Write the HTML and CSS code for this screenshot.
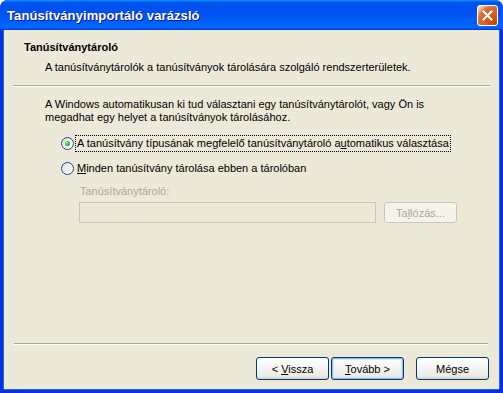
FILE: index.html
```html
<!DOCTYPE html>
<html lang="hu">
<head>
  <meta charset="UTF-8" />
  <title>Tanúsítványimportáló varázsló</title>
  <link rel="stylesheet" href="styles.css">
</head>
<body>
  <div class="window">
    <!-- Címsor -->
    <div class="titlebar">
      <span class="title-text">Tanúsítványimportáló varázsló</span>
      <button class="close-btn" aria-label="Bezárás">
        <svg width="13" height="13" viewBox="0 0 13 13">
          <path d="M2.5 2.5 L10.5 10.5 M10.5 2.5 L2.5 10.5" stroke="#fff" stroke-width="2" stroke-linecap="square" fill="none"/>
        </svg>
      </button>
    </div>
    <div class="client">
      <!-- Fejléc -->
      <div class="header">
        <div class="header-title">Tanúsítványtároló</div>
        <div class="header-sub">A tanúsítványtárolók a tanúsítványok tárolására szolgáló rendszerterületek.</div>
      </div>
      <div class="separator top-sep"></div>
      <!-- Tartalom -->
      <div class="page">
        <p class="intro">A Windows automatikusan ki tud választani egy tanúsítványtárolót, vagy Ön is megadhat egy helyet a tanúsítványok tárolásához.</p>
        <div class="options">
          <label class="option">
            <span class="radio checked"></span>
            <span class="option-text focused">A tanúsítvány típusának megfelelő tanúsítványtároló a<u>u</u>tomatikus választása</span>
          </label>
          <label class="option">
            <span class="radio"></span>
            <span class="option-text"><u>M</u>inden tanúsítvány tárolása ebben a tárolóban</span>
          </label>
        </div>
        <div class="store">
          <div class="store-label">Tanúsítványtároló:</div>
          <div class="store-row">
            <div class="textbox"></div>
            <button class="btn disabled">Ta<u>l</u>lózás...</button>
          </div>
        </div>
      </div>
      <!-- Lábléc -->
      <div class="footer">
        <div class="separator bottom-sep"></div>
        <div class="buttons">
          <button class="btn">&lt; <u>V</u>issza</button>
          <button class="btn default"><u>T</u>ovább &gt;</button>
          <button class="btn cancel">Mégse</button>
        </div>
      </div>
    </div>
  </div>
</body>
</html>
```

FILE: styles.css
```css
body {
  margin: 0;
  background: #fff;
  font-family: 'Liberation Sans', Arial, sans-serif;
  font-size: 11px;
  color: #000;
}
.window {
  width: 503px;
  height: 393px;
  display: flex;
  flex-direction: column;
  border-radius: 8px 8px 0 0;
  overflow: hidden;
  background: #0831d9;
}
.titlebar {
  height: 30px;
  flex: 0 0 30px;
  display: flex;
  align-items: center;
  justify-content: space-between;
  padding: 0 5px 0 7px;
  background: linear-gradient(180deg, #0997ff, #0053ee 8%, #0050ee 40%, #06f 88%, #06f 93%, #005bff 95%, #003dd7 96%, #003dd7);
}
.title-text {
  color: #fff;
  font-weight: bold;
  font-size: 13px;
  letter-spacing: 0.1px;
  text-shadow: 1px 1px #0f1089;
}
.close-btn {
  width: 21px;
  height: 21px;
  padding: 0;
  margin-top: 1px;
  border: 1px solid #fff;
  border-radius: 3px;
  display: flex;
  align-items: center;
  justify-content: center;
  background: radial-gradient(circle at 90% 90%, #cc4600 0, #dc6527 55%, #cd7546 70%, #ffccb2 90%, #fff 100%);
}
.client {
  flex: 1;
  display: flex;
  flex-direction: column;
  background: #ece9d8;
  margin: 0 4px 4px 4px;
  box-shadow: -1px 0 #166aee, 1px 0 #166aee, 0 1px #166aee;
}
.header {
  padding: 11px 0 0 20px;
  line-height: 13px;
}
.header-title {
  font-weight: bold;
}
.header-sub {
  margin: 7px 0 0 21px;
}
.separator {
  height: 0;
  border-top: 1px solid #aca899;
  border-bottom: 1px solid #fff;
}
.top-sep {
  margin: 11px 9px 0 9px;
}
.page {
  padding: 0 0 0 41px;
  line-height: 13px;
}
.intro {
  margin: 11px 0 0 0;
  width: 410px;
}
.options {
  display: flex;
  flex-direction: column;
  gap: 8px;
  margin: 11px 0 0 16px;
}
.option {
  display: flex;
  align-items: center;
  height: 17px;
}
.radio {
  width: 11px;
  height: 11px;
  border: 1px solid #1c5180;
  border-radius: 50%;
  background: linear-gradient(135deg, #dcdcd7, #fff);
  display: flex;
  align-items: center;
  justify-content: center;
  margin-right: 2px;
}
.radio.checked::after {
  content: "";
  width: 5px;
  height: 5px;
  border-radius: 50%;
  background: radial-gradient(circle at 35% 35%, #9fe59f, #21a121 70%);
}
.option-text {
  padding: 1px 1px;
}
.option-text.focused {
  outline: 1px dotted #000;
  outline-offset: 0;
}
.store {
  margin: 8px 0 0 34px;
}
.store-label {
  color: #aca899;
  margin-left: 1px;
}
.store-row {
  display: flex;
  gap: 8px;
  margin-top: 4px;
}
.textbox {
  width: 295px;
  height: 19px;
  border: 1px solid #c9c7ba;
  background: #ece9d8;
}
.btn {
  width: 73px;
  height: 23px;
  padding: 0;
  font-family: inherit;
  font-size: 11px;
  color: #000;
  border: 1px solid #003c74;
  border-radius: 3px;
  background: linear-gradient(180deg, #fff, #ecebe6 86%, #d6d0c5);
}
.btn.disabled {
  color: #aca899;
  border-color: #c9c7ba;
  background: #f5f4ea;
  height: 21px;
}
.btn.default {
  box-shadow: inset 0 0 0 1px #98b8ea, inset 0 0 0 2px #cee7ff;
}
.footer {
  margin-top: auto;
}
.bottom-sep {
  margin: 0 11px 0 10px;
}
.buttons {
  display: flex;
  justify-content: flex-end;
  gap: 2px;
  padding: 12px 10px 9px 0;
}
.btn.cancel {
  margin-left: 10px;
}
```
